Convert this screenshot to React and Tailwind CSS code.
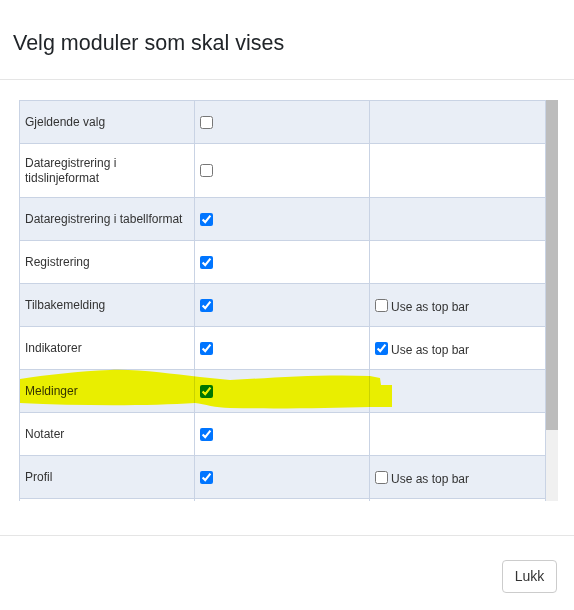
const rows = [
  { name: "Gjeldende valg", checked: false },
  { name: "Dataregistrering i tidslinjeformat", checked: false, tall: true },
  { name: "Dataregistrering i tabellformat", checked: true },
  { name: "Registrering", checked: true },
  { name: "Tilbakemelding", checked: true, topBar: false },
  { name: "Indikatorer", checked: true, topBar: true },
  { name: "Meldinger", checked: true },
  { name: "Notater", checked: true },
  { name: "Profil", checked: true, topBar: false },
  // next row is scrolled out of view, only its top edge shows
  { name: "", checked: true, hidden: true },
];

function Row({ row, index }) {
  const striped = index % 2 === 0;
  return (
    <div
      className={`grid grid-cols-[175px_175px_176px] border-b border-[#c9d3e4] ${
        row.tall ? "h-[54px]" : "h-[43px]"
      } ${striped ? "bg-[#e9eef6]" : "bg-white"}`}
    >
      <div className="flex items-center border-r border-[#c9d3e4] px-[5px] leading-[15px]">
        {row.name}
      </div>
      <div className="flex items-center border-r border-[#c9d3e4] pl-[5px]">
        {!row.hidden && (
          <input type="checkbox" defaultChecked={row.checked} className="m-0 h-[13px] w-[13px]" />
        )}
      </div>
      <div className="flex items-center border-r border-[#c9d3e4] pl-[5px]">
        {row.topBar !== undefined && (
          <label className="flex items-center">
            <input type="checkbox" defaultChecked={row.topBar} className="m-0 h-[13px] w-[13px]" />
            <span className="ml-[3px] mt-[3px]">Use as top bar</span>
          </label>
        )}
      </div>
    </div>
  );
}

export default function App() {
  return (
    <div className="relative w-[574px] h-[610px] bg-white text-[#333] font-['Liberation_Sans',Arial,sans-serif]">
      {/* Header */}
      <div className="h-[80px] border-b border-[#e5e5e5] px-[13px] pt-[31px]">
        <h5 className="text-[21.5px] leading-[24px] text-[#212529]">Velg moduler som skal vises</h5>
      </div>

      {/* Body */}
      <div className="h-[455px] pt-[20px] pl-[19px]">
        <div className="flex h-[401px] w-[539px] overflow-hidden">
          <div className="w-[527px] shrink-0 border-l border-t border-[#c9d3e4] text-[12px]">
            {rows.map((row, i) => (
              <Row key={i} row={row} index={i} />
            ))}
          </div>
          <div className="flex w-[12px] shrink-0 flex-col bg-[#f0f0f0]">
            <div className="h-[330px] bg-[#bcbcbc]" />
          </div>
        </div>
      </div>

      {/* Footer */}
      <div className="flex justify-end border-t border-[#e5e5e5] pt-[24px] pr-[17px]">
        <button className="h-[33px] w-[55px] rounded-[4px] border border-[#cccccc] bg-white text-[14px] text-[#333]">
          Lukk
        </button>
      </div>

      {/* highlighter marks */}
      <svg
        className="pointer-events-none absolute left-0 top-0 mix-blend-darken"
        width="574"
        height="610"
        viewBox="0 0 574 610"
      >
        <path
          d="M20,379 C45,375 80,371 110,370 C140,369 170,374 200,377 L230,380 C270,378 320,374 370,376 L380,378 L381,385 L392,385 L392,407 L370,407 C330,408 280,409 230,408 C215,408 205,404 195,403 C150,406 80,406 20,403 Z"
          fill="#ecf000"
        />
      </svg>
    </div>
  );
}
